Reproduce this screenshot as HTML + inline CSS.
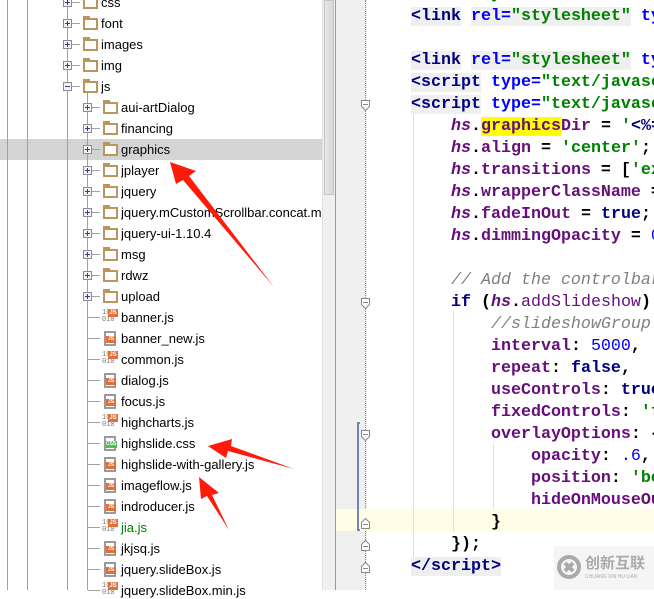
<!DOCTYPE html>
<html><head><meta charset="utf-8"><style>
*{margin:0;padding:0;box-sizing:border-box}
body{width:654px;height:590px;overflow:hidden;background:#fff;position:relative;font-family:"Liberation Sans","Noto Sans CJK SC",sans-serif}
.a{position:absolute}
.vl{position:absolute;width:1px;background:#a0a0a0}
.hl{position:absolute;height:1px;background:#a0a0a0}
.pb{position:absolute;width:9px;height:9px;border:1px solid #8c8c8c;background:#f4f4f4}
.pb:before{content:"";position:absolute;left:1px;top:3px;width:5px;height:1px;background:#2a3f8f}
.pb.p:after{content:"";position:absolute;left:3px;top:1px;width:1px;height:5px;background:#2a3f8f}
.fd{position:absolute;width:15px;height:12px;border:2px solid #b99560;background:#fff}
.fd:before{content:"";position:absolute;left:-2px;top:-4px;width:7px;height:3px;background:#b99560}
.t{position:absolute;font-size:13px;color:#000;white-space:nowrap;line-height:16px}
.js{position:absolute;width:12px;height:15px;border:2px solid #9a9a9a;background:#fff}
.js b{position:absolute;left:0px;top:3px;width:10px;height:7px;background:#e0703a;color:#fff;font:bold 5px "Liberation Sans",sans-serif;line-height:7px;text-align:center}
.bin{position:absolute;font:7px "Liberation Mono",monospace;color:#777;line-height:7px;width:16px}
.bin b{position:absolute;left:6px;top:-1px;width:10px;height:8px;background:#e0703a;color:#fff;font:bold 6px "Liberation Sans",sans-serif;line-height:8px;text-align:center}
.code{position:absolute;left:411px;font:bold 16.67px/22px "Liberation Mono",monospace;white-space:pre;color:#000}
.tg{color:#000080}.at{color:#0000ff}.st{color:#008000}.hs{color:#660e7a;font-style:italic}.pr{color:#660e7a}.cm{color:#808080;font-style:italic;font-weight:normal}.nm{color:#0000ff;font-weight:normal}.kw{color:#000080}
.tb{background:#efefef}
</style></head><body>
<div class="a" style="left:0;top:139px;width:322px;height:21px;background:#d4d4d4"></div>
<div class="vl" style="left:7px;top:0;height:590px"></div>
<div class="vl" style="left:27px;top:0;height:590px"></div>
<div class="vl" style="left:67px;top:0;height:590px"></div>
<div class="vl" style="left:87px;top:91px;height:499px"></div>

<div id="tree"></div>
<script>
var rows=[
[1,'css','p'],[1,'font','p'],[1,'images','p'],[1,'img','p'],[1,'js','m'],
[2,'aui-artDialog','p'],[2,'financing','p'],[2,'graphics','p'],[2,'jplayer','p'],[2,'jquery','p'],[2,'jquery.mCustomScrollbar.concat.min','p'],[2,'jquery-ui-1.10.4','p'],[2,'msg','p'],[2,'rdwz','p'],[2,'upload','p'],
[3,'banner.js','b'],[3,'banner_new.js','j'],[3,'common.js','b'],[3,'dialog.js','j'],[3,'focus.js','j'],[3,'highcharts.js','b'],[3,'highslide.css','c'],[3,'highslide-with-gallery.js','j'],[3,'imageflow.js','j'],[3,'indroducer.js','j'],[3,'jia.js','b'],[3,'jkjsq.js','j'],[3,'jquery.slideBox.js','j'],[3,'jquery.slideBox.min.js','b']];
var h='';
rows.forEach(function(r,i){var c=2+21*i;
if(r[0]<3){var bx=r[0]==1?67:87;
h+='<div class="pb '+(r[2]=='p'?'p':'')+'" style="left:'+(bx-4)+'px;top:'+(c-4)+'px"></div>';
h+='<div class="hl" style="left:'+(bx+5)+'px;top:'+c+'px;width:8px"></div>';
h+='<div class="fd" style="left:'+(bx+16)+'px;top:'+(c-5)+'px"></div>';
h+='<div class="t" style="left:'+(bx+34)+'px;top:'+(c-7)+'px;max-width:'+(322-bx-34)+'px;overflow:hidden">'+r[1]+'</div>';
}else{
h+='<div class="hl" style="left:88px;top:'+c+'px;width:12px"></div>';
if(r[2]=='b')h+='<div class="bin" style="left:102px;top:'+(c-7)+'px">10<br>010<b>JS</b></div>';
else if(r[2]=='c')h+='<div class="js" style="left:104px;top:'+(c-7)+'px"><b style="background:#5cb85c;left:-1px;width:12px">CSS</b></div>';
else h+='<div class="js" style="left:104px;top:'+(c-7)+'px"><b>JS</b></div>';
h+='<div class="t" style="left:121px;top:'+(c-7)+'px;'+(r[1]=='jia.js'?'color:#008000':'')+'">'+r[1]+'</div>';}
});
document.getElementById('tree').innerHTML=h;
</script>
<div class="a" style="left:322px;top:0;width:13px;height:590px;background:#f0f0f0;border-left:1px solid #e2e2e2"></div>
<div class="a" style="left:324px;top:0;width:10px;height:195px;background:linear-gradient(90deg,#e8e8e8,#d6d6d6);border:1px solid #c6c6c6"></div>
<div class="a" style="left:335px;top:0;width:1px;height:590px;background:#9a9a9a"></div>
<div class="a" style="left:336px;top:0;width:31px;height:590px;background:#f0f0f0"></div>
<div class="a" style="left:365px;top:0;width:0;height:590px;border-left:1px dotted #888"></div>
<div class="a" style="left:336px;top:509px;width:318px;height:22px;background:#fffde6"></div>
<div class="a" style="left:357px;top:422px;width:3px;height:109px;border:2px solid #6e88b4;border-right:none"></div>
<div class="a" style="left:413px;top:113px;width:1px;height:462px;background:#e0e0e0"></div>
<div class="a" style="left:453px;top:311px;width:1px;height:221px;background:#e0e0e0"></div>
<div class="a" style="left:493px;top:443px;width:1px;height:66px;background:#e0e0e0"></div>
<svg class="a" style="left:0;top:0" width="654" height="590">
<g fill="#fff" stroke="#888" stroke-width="1">
<path d="M361.5,100.5h8v6l-4,4l-4,-4z"/><path d="M363,104.5h5"/>
<path d="M361.5,298.5h8v6l-4,4l-4,-4z"/><path d="M363,302.5h5"/>
<path d="M361.5,430.5h8v6l-4,4l-4,-4z"/><path d="M363,434.5h5"/>
<path d="M361.5,528.5h8v-6l-4,-4l-4,4z"/><path d="M363,524.5h5"/>
<path d="M361.5,550.5h8v-6l-4,-4l-4,4z"/><path d="M363,546.5h5"/>
<path d="M361.5,572.5h8v-6l-4,-4l-4,4z"/><path d="M363,568.5h5"/>
</g></svg>
<div class="code" style="top:-16px"><span class="tg">        <span class="st">y</span></span>
<span class="tg tb">&lt;link</span> <span class="at tb">rel=</span><span class="st tb">"stylesheet"</span> <span class="at">ty</span>

<span class="tg tb">&lt;link</span> <span class="at tb">rel=</span><span class="st tb">"stylesheet"</span> <span class="at">ty</span>
<span class="tg tb">&lt;script</span> <span class="at">type=</span><span class="st">"text/javasc</span>
<span class="tg tb">&lt;script</span> <span class="at">type=</span><span class="st">"text/javasc</span>
    <span class="hs">hs</span>.<span class="pr"><span style="background:#ffff00">graphics</span>Dir</span> = <span class="st">'<span style="color:#000080">&lt;%=</span></span>
    <span class="hs">hs</span>.<span class="pr">align</span> = <span class="st">'center'</span>;
    <span class="hs">hs</span>.<span class="pr">transitions</span> = [<span class="st">'ex</span>
    <span class="hs">hs</span>.<span class="pr">wrapperClassName</span> =
    <span class="hs">hs</span>.<span class="pr">fadeInOut</span> = <span class="kw">true</span>;
    <span class="hs">hs</span>.<span class="pr">dimmingOpacity</span> = <span class="nm">0</span>

    <span class="cm">// Add the controlbar</span>
    <span class="kw">if</span> (<span class="hs">hs</span>.<span class="pr" style="font-weight:normal">addSlideshow</span>)
        <span class="cm">//slideshowGroup</span>
        <span class="pr">interval</span>: <span class="nm">5000</span>,
        <span class="pr">repeat</span>: <span class="kw">false</span>,
        <span class="pr">useControls</span>: <span class="kw">true</span>
        <span class="pr">fixedControls</span>: <span class="st">'f</span>
        <span class="pr">overlayOptions</span>: {
            <span class="pr">opacity</span>: <span class="nm">.6</span>,
            <span class="pr">position</span>: <span class="st">'bo</span>
            <span class="pr">hideOnMouseOut</span>
        }
    });
<span class="tg tb">&lt;/script&gt;</span></div>
<div class="a" style="left:554px;top:546px;width:100px;height:44px;background:#f4f4f4;opacity:.95"></div>
<svg class="a" style="left:557px;top:555px" width="24" height="24"><circle cx="12" cy="12" r="10" fill="none" stroke="#aaa" stroke-width="4"/><path d="M8 8l8 8M16 8l-8 8" stroke="#aaa" stroke-width="4"/></svg>
<div class="a" style="left:585px;top:554px;font:bold 15px 'Noto Sans CJK SC',sans-serif;color:#aaa;line-height:18px">创新互联</div>
<div class="a" style="left:585px;top:574px;font:5px 'Liberation Sans',sans-serif;color:#aaa">CHUANG XIN HU LIAN</div>
<svg class="a" style="left:0;top:0" width="654" height="590">
<g fill="#ff1a0a">
<polygon points="170,162 196,171 189,176 274,287 183,180 176,184"/>
<polygon points="208,446 232,439 231,446 294,469 228,451 226,458"/>
<polygon points="199,477 219,493 212,495 229,530 207,496 201,499"/>
</g></svg>
</body></html>
